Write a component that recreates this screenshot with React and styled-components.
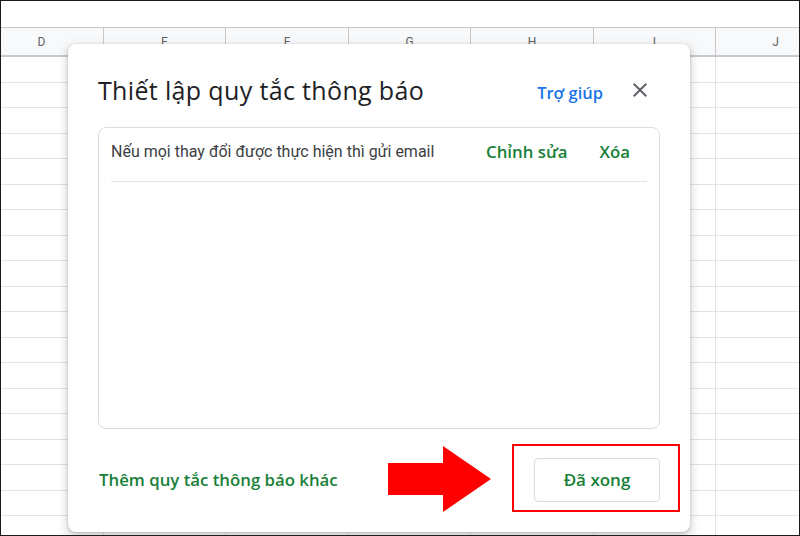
import React from "react";
import styled, { createGlobalStyle } from "styled-components";

const GlobalStyle = createGlobalStyle`
  * { box-sizing: border-box; }
  html, body { margin: 0; padding: 0; background: #fff; }
  body { font-family: Roboto, "Open Sans", Arial, sans-serif; }
`;

const columns = [
  { name: "D", width: 124 },
  { name: "E", width: 122 },
  { name: "F", width: 123 },
  { name: "G", width: 122 },
  { name: "H", width: 123 },
  { name: "I", width: 122 },
  { name: "J", width: 120 },
];

const ROWS = 19;

const Frame = styled.div`
  position: relative;
  width: 800px;
  height: 536px;
  overflow: hidden;
  border: 1px solid #1c1c1c;
  background: #fff;
`;

const Sheet = styled.div`
  margin-left: -21px;
  padding-top: 26px;
`;

const HeaderRow = styled.div`
  display: flex;
  height: 30px;
  background: #f8f9fa;
  border-top: 1px solid #c7c7c7;
  border-bottom: 2px solid #c7c9cc;
`;

const HeaderCell = styled.div`
  flex: 0 0 ${(p) => p.$w}px;
  border-right: 1px solid #c7c7c7;
  display: flex;
  align-items: center;
  justify-content: center;
  font-family: Roboto, Arial, sans-serif;
  font-size: 12px;
  color: #5f6368;
`;

const GridRow = styled.div`
  display: flex;
  height: 25.5px;
  border-bottom: 1px solid #e2e3e3;
`;

const GridCell = styled.div`
  flex: 0 0 ${(p) => p.$w}px;
  border-right: 1px solid #e2e3e3;
`;

const Dialog = styled.div`
  position: absolute;
  left: 67px;
  top: 43px;
  width: 622px;
  height: 488px;
  background: #fff;
  border-radius: 8px;
  box-shadow: 0 4px 8px 3px rgba(60, 64, 67, 0.15),
    0 1px 3px rgba(60, 64, 67, 0.3);
  padding: 26px 30px 0 30px;
  display: flex;
  flex-direction: column;
`;

const TitleBar = styled.div`
  display: flex;
  align-items: center;
  height: 40px;
`;

const Title = styled.h1`
  flex: 1;
  margin: 0;
  font-family: "Open Sans", Arial, sans-serif;
  font-weight: 400;
  font-size: 25px;
  color: #202124;
  letter-spacing: 0.35px;
`;

const HelpLink = styled.a`
  font-family: "Open Sans", Arial, sans-serif;
  font-size: 16.5px;
  font-weight: 600;
  color: #1a73e8;
  text-decoration: none;
  margin-right: 17px;
  margin-top: 4px;
`;

const IconButton = styled.button`
  width: 40px;
  height: 40px;
  border: none;
  background: transparent;
  padding: 8px;
  display: flex;
  align-items: center;
  justify-content: center;
  color: #5f6368;
  cursor: pointer;
`;

const RuleBox = styled.div`
  margin-top: 17px;
  height: 302px;
  border: 1px solid #dadce0;
  border-radius: 8px;
  padding: 0 12px;
`;

const RuleRow = styled.div`
  display: flex;
  align-items: center;
  height: 54px;
  border-bottom: 1px solid #e2e3e5;
  padding-bottom: 7px;
`;

const RuleText = styled.span`
  flex: 1;
  font-family: Roboto, Arial, sans-serif;
  font-size: 16px;
  color: #3c4043;
`;

const TextAction = styled.a`
  font-family: "Open Sans", Arial, sans-serif;
  font-size: 16.8px;
  font-weight: 600;
  color: #188038;
  text-decoration: none;
  margin-left: ${(p) => p.$gap || 0}px;
  margin-right: ${(p) => p.$end || 0}px;
`;

const Footer = styled.div`
  flex: 1;
  display: flex;
  align-items: center;
  justify-content: space-between;
  padding-bottom: 2px;
  padding-left: 1px;
`;

const DoneButton = styled.button`
  width: 126px;
  height: 44px;
  border: 1px solid #dadce0;
  border-radius: 4px;
  background: #fff;
  font-family: "Open Sans", Arial, sans-serif;
  font-size: 17px;
  font-weight: 600;
  color: #188038;
  cursor: pointer;
`;

const Highlight = styled.div`
  position: absolute;
  left: 511px;
  top: 443px;
  width: 168px;
  height: 68px;
  border: 2px solid #f00;
`;

const Arrow = styled.svg`
  position: absolute;
  left: 387px;
  top: 445px;
`;

const CloseIcon = () => (
  <svg width="24" height="24" viewBox="0 0 24 24" fill="currentColor">
    <path d="M19 6.41L17.59 5 12 10.59 6.41 5 5 6.41 10.59 12 5 17.59 6.41 19 12 13.41 17.59 19 19 17.59 13.41 12z" />
  </svg>
);

export default function App() {
  return (
    <>
      <GlobalStyle />
      <Frame>
        <Sheet>
          <HeaderRow>
            {columns.map((c) => (
              <HeaderCell key={c.name} $w={c.width}>
                {c.name}
              </HeaderCell>
            ))}
          </HeaderRow>
          {Array.from({ length: ROWS }).map((_, i) => (
            <GridRow key={i}>
              {columns.map((c) => (
                <GridCell key={c.name} $w={c.width} />
              ))}
            </GridRow>
          ))}
        </Sheet>

        <Dialog>
          <TitleBar>
            <Title>Thiết lập quy tắc thông báo</Title>
            <HelpLink href="#">Trợ giúp</HelpLink>
            <IconButton aria-label="Đóng">
              <CloseIcon />
            </IconButton>
          </TitleBar>

          <RuleBox>
            <RuleRow>
              <RuleText>Nếu mọi thay đổi được thực hiện thì gửi email</RuleText>
              <TextAction href="#">Chỉnh sửa</TextAction>
              <TextAction href="#" $gap={32} $end={17}>
                Xóa
              </TextAction>
            </RuleRow>
          </RuleBox>

          <Footer>
            <TextAction href="#">Thêm quy tắc thông báo khác</TextAction>
            <DoneButton>Đã xong</DoneButton>
          </Footer>
        </Dialog>

        <Highlight />
        <Arrow width="104" height="66" viewBox="0 0 104 66">
          <polygon points="0,17 55,17 55,0 103,33 55,66 55,49 0,49" fill="#ff0000" />
        </Arrow>
      </Frame>
    </>
  );
}
